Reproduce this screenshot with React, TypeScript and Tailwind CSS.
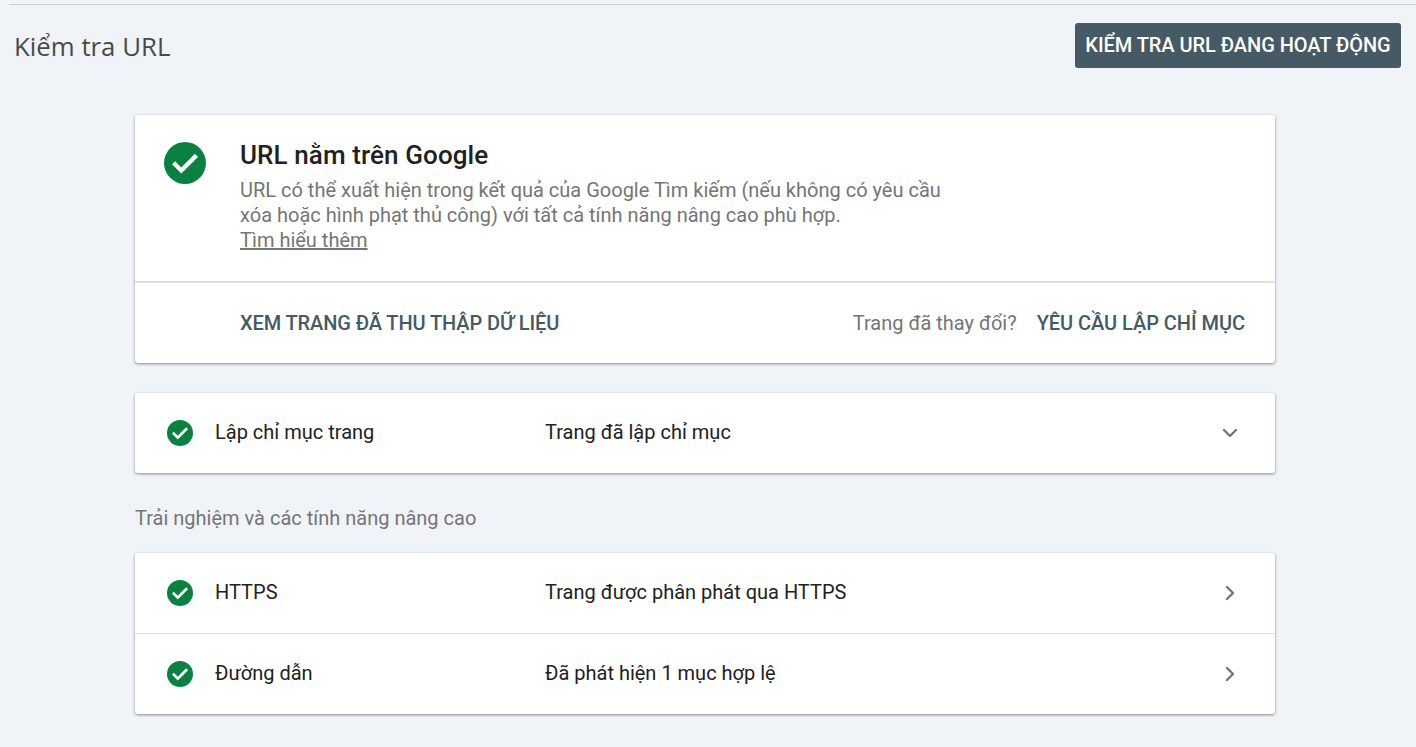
import { ChevronDown, ChevronRight } from 'lucide-react';

function CheckBadge({ size }: { size: number }) {
  return (
    <svg width={size} height={size} viewBox="0 0 24 24" className="shrink-0">
      <circle cx="12" cy="12" r="12" fill="#0b8043" />
      <path d="M4.6 12.7l1.75-1.75 3.55 3.55 7.75-7.75 1.75 1.75-9.5 9.5z" fill="#fff" />
    </svg>
  );
}

function Row({ label, value, open, divider }: { label: string; value: string; open?: boolean; divider?: boolean }) {
  return (
    <div className={`flex items-center ${divider ? 'h-[81px] border-t border-[#e0e0e0]' : 'h-[80px]'}`}>
      <div className="w-[80px] pl-[32px] shrink-0">
        <CheckBadge size={26} />
      </div>
      <div className="w-[330px] shrink-0 text-[20px] text-[#212121] -mt-[2px]">{label}</div>
      <div className="flex-1 text-[20px] text-[#212121] -mt-[2px]">{value}</div>
      <div className="pr-[33px] text-[#757575]">
        {open ? <ChevronDown size={24} strokeWidth={2.4} /> : <ChevronRight size={24} strokeWidth={2.4} />}
      </div>
    </div>
  );
}

export default function App() {
  return (
    <div className="w-[1416px] h-[747px] overflow-hidden bg-[#f0f4f9] pt-[4px] font-['Roboto',sans-serif]">
      <div className="ml-[9px] border-t border-[#c8cccf]" />

      {/* Header */}
      <div className="flex items-center justify-between h-[85px] pl-[14px] pr-[15px]">
        <h1 className="text-[25.8px] text-[#4a4a4a] font-['Open_Sans',sans-serif] -mt-[2px]">Kiểm tra URL</h1>
        <button className="h-[45px] w-[326px] rounded-[3px] bg-[#455a64] text-white text-[20px] font-medium tracking-[-0.05px] pb-[2px] -mt-[4px]">
          KIỂM TRA URL ĐANG HOẠT ĐỘNG
        </button>
      </div>

      <div className="w-[1140px] ml-[135px] mt-[25px]">
        {/* Verdict */}
        <div className="bg-white rounded-[3px] shadow-[0_1px_3px_rgba(60,64,67,0.6)]">
          <div className="flex h-[168px] border-b-2 border-[#e0e0e0]">
            <div className="w-[105px] pl-[29px] pt-[27px] shrink-0">
              <CheckBadge size={42} />
            </div>
            <div className="pt-[21px]">
              <div className="text-[26px] leading-[38px] font-medium text-[#212121] tracking-[0.1px]">URL nằm trên Google</div>
              <p className="text-[20px] leading-[25px] text-[#757575] mt-[4px]">
                URL có thể xuất hiện trong kết quả của Google Tìm kiếm (nếu không có yêu cầu
                <br />
                xóa hoặc hình phạt thủ công) với tất cả tính năng nâng cao phù hợp.
                <br />
                <span className="underline">Tìm hiểu thêm</span>
              </p>
            </div>
          </div>
          <div className="flex items-center justify-between h-[80px] pl-[105px] pr-[30px]">
            <span className="text-[20px] font-medium text-[#455a64] tracking-[-0.1px]">XEM TRANG ĐÃ THU THẬP DỮ LIỆU</span>
            <div className="flex items-center gap-[20px]">
              <span className="text-[20px] text-[#757575]">Trang đã thay đổi?</span>
              <span className="text-[20px] font-medium text-[#455a64] tracking-[-0.05px]">YÊU CẦU LẬP CHỈ MỤC</span>
            </div>
          </div>
        </div>

        {/* Indexing */}
        <div className="mt-[30px] bg-white rounded-[3px] shadow-[0_1px_3px_rgba(60,64,67,0.6)]">
          <Row label="Lập chỉ mục trang" value="Trang đã lập chỉ mục" open />
        </div>

        <div className="h-[80px] flex items-center pt-[9px] text-[20px] text-[#757575]">Trải nghiệm và các tính năng nâng cao</div>

        {/* Enhancements */}
        <div className="bg-white rounded-[3px] shadow-[0_1px_3px_rgba(60,64,67,0.6)]">
          <Row label="HTTPS" value="Trang được phân phát qua HTTPS" />
          <Row label="Đường dẫn" value="Đã phát hiện 1 mục hợp lệ" divider />
        </div>
      </div>
    </div>
  );
}
